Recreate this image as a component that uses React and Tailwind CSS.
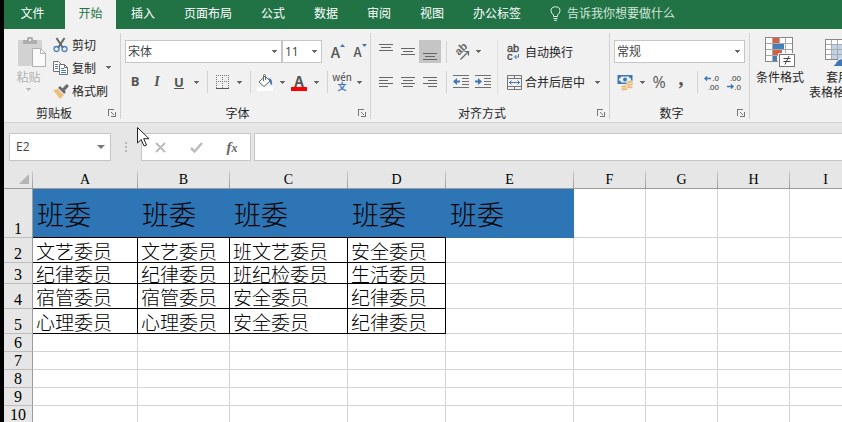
import React, { useState } from "react";

const tabs = ["插入", "页面布局", "公式", "数据", "审阅", "视图", "办公标签"];

const columns = ["A", "B", "C", "D", "E", "F", "G", "H", "I"];

const rows = [
  { id: 1, height: "h-[49px]", cells: ["班委", "班委", "班委", "班委", "班委"] },
  { id: 2, height: "h-[25px]", cells: ["文艺委员", "文艺委员", "班文艺委员", "安全委员"] },
  { id: 3, height: "h-[21px]", cells: ["纪律委员", "纪律委员", "班纪检委员", "生活委员"] },
  { id: 4, height: "h-[25px]", cells: ["宿管委员", "宿管委员", "安全委员", "纪律委员"] },
  { id: 5, height: "h-[25px]", cells: ["心理委员", "心理委员", "安全委员", "纪律委员"] },
  { id: 6, height: "h-[18px]", cells: [] },
  { id: 7, height: "h-[18px]", cells: [] },
  { id: 8, height: "h-[18px]", cells: [] },
  { id: 9, height: "h-[18px]", cells: [] },
  { id: 10, height: "h-[18px]", cells: [] },
];

const Caret = ({ color = "#666" }) => (
  <svg width="5" height="3" viewBox="0 0 5 3" shapeRendering="crispEdges">
    <path d="M0 0h5v1H0zM1 1h3v1H1zM2 2h1v1H2z" fill={color} />
  </svg>
);

const CaretButton = ({ label }) => (
  <button aria-label={label} className="flex h-[22px] w-3 shrink-0 items-center justify-center">
    <Caret />
  </button>
);

const Tool = ({ label, active, children }) => (
  <button
    aria-label={label}
    className={`flex w-[22px] shrink-0 items-center justify-center ${active ? "h-[23px] bg-[#c5c5c5]" : "h-[22px]"}`}
  >
    {children}
  </button>
);

const Divider = () => <span className="ml-[5px] mr-[3px] h-[22px] w-px shrink-0 bg-[#d2d2d2]" />;

const Group = ({ title, children }) => (
  <section className="flex shrink-0 flex-col justify-between border-r border-[#d2d2d2]">
    {children}
    <div className="flex h-3 items-center">
      <h2 className="flex-1 text-center text-xs leading-3">{title}</h2>
      <button aria-label={`${title}设置`} className="flex w-4 justify-center">
        <svg width="8" height="8" viewBox="0 0 8 8" shapeRendering="crispEdges">
          <path d="M0 0h6v1H1v6H0zM3 3h1v1H3zM4 4h1v1H4zM5 5h1v1H5z" fill="#777" />
          <path d="M7 3h1v5H3V7h4z" fill="#777" />
        </svg>
      </button>
    </div>
  </section>
);

const Picker = ({ label, value, width }) => (
  <div className={`relative ${width}`}>
    <select
      aria-label={label}
      defaultValue={value}
      className="block h-[23px] w-full appearance-none border border-[#c6c6c6] bg-white pl-[2px] font-['Open_Sans','Noto_Sans_CJK_SC',sans-serif] text-xs text-[#444]"
    >
      <option>{value}</option>
    </select>
    <span className="pointer-events-none absolute right-[5px] top-[10px]">
      <Caret />
    </span>
  </div>
);

// Stacked text lines, given as [x, width] pairs
const Lines = ({ lines, top = 0 }) => (
  <svg width="14" height="16" viewBox="0 0 14 16" shapeRendering="crispEdges">
    {lines.map(([x, w], i) => (
      <rect key={i} x={x} y={top + i * 3} width={w} height="1" fill="#666" />
    ))}
  </svg>
);

const PasteIcon = () => (
  <svg width="28" height="30" viewBox="0 0 28 30">
    <rect x="0" y="3" width="24" height="26" rx="1" fill="#d3d2d2" />
    <path d="M5 3h4V1.500Q9 0 10.500 0h3Q15 0 15 1.500V3h4v4H5z" fill="#adadad" />
    <rect x="11" y="2" width="2" height="2" fill="#f1f1f1" />
    <path d="M14.500 11.500h8l5 5v13h-13z" fill="#fafafa" stroke="#b1b1b1" />
    <path d="M22.500 11.500v5h5" fill="none" stroke="#b1b1b1" />
  </svg>
);

const CutIcon = () => (
  <svg width="16" height="16" viewBox="0 0 16 16" fill="none">
    <path d="M3.500 1L10 11M11.500 1L5 11" stroke="#666" strokeWidth="2" />
    <circle cx="3.500" cy="12" r="2.500" stroke="#4a7ebb" strokeWidth="1.300" />
    <circle cx="11.500" cy="12" r="2.500" stroke="#4a7ebb" strokeWidth="1.300" />
  </svg>
);

const CopyIcon = () => (
  <svg width="16" height="16" viewBox="0 0 16 16" fill="#fff">
    <path d="M.5 1.500h5l3 3v7h-8z" stroke="#707070" />
    <path d="M2 4.500h3M2 6.500h3M2 8.500h3" stroke="#4a7ebb" />
    <path d="M6.500 4.500h5l3 3v7h-8z" stroke="#707070" />
    <path d="M11.500 4.500v3h3" stroke="#707070" fill="none" />
    <path d="M8 8.500h3M8 10.500h5M8 12.500h5" stroke="#4a7ebb" />
  </svg>
);

const BrushIcon = () => (
  <svg width="16" height="16" viewBox="0 0 16 16">
    <path d="M0 7l5-1 6 6-4 4z" fill="#ebc07c" />
    <path d="M5 5l2-2 6 6-2 2z" fill="#6b6b6b" />
    <path d="M9 6l4.500-5 2.500 2-4.500 5z" fill="#6b6b6b" />
    <path d="M5 5.500l6 6" stroke="#f1f1f1" />
  </svg>
);

const BorderIcon = () => (
  <svg width="13" height="14" viewBox="0 0 13 14" shapeRendering="crispEdges" stroke="#777" fill="none">
    <path d="M0 .5h13M0 6.500h13" strokeDasharray="1 1" />
    <path d="M.5 0v13M6.500 0v13M12.500 0v13" strokeDasharray="1 1" />
    <path d="M0 13.500h13" stroke="#555" />
  </svg>
);

const BucketIcon = () => (
  <svg width="16" height="17" viewBox="0 0 16 17">
    <path d="M2 8l6-6 5 5-6 5.500z" fill="#fff" stroke="#666" />
    <path d="M6.500 7V1.500Q6.500.5 7.500.5T8.500 1.500V6" fill="none" stroke="#666" />
    <path d="M11 4q5 0 4 7-2.500-.5-2-4z" fill="#4a7ebb" />
    <rect y="13" width="16" height="4" fill="#fff" />
  </svg>
);

const OrientIcon = () => (
  <svg width="17" height="16" viewBox="0 0 17 16">
    <text
      x="0"
      y="0"
      transform="translate(6 12) rotate(-45)"
      fontSize="11"
      fontWeight="bold"
      fontFamily="Liberation Sans, sans-serif"
      fill="#666"
    >
      ab
    </text>
    <path d="M7.500 15.500l8-8M11.500 7.500h4v4" fill="none" stroke="#666" strokeWidth="1.200" />
  </svg>
);

const IndentIcon = ({ right }) => (
  <svg width="16" height="14" viewBox="0 0 16 14">
    <path d="M0 .5h16M9 3.500h7M9 6.500h7M9 9.500h7M0 12.500h16" stroke="#707070" shapeRendering="crispEdges" />
    <path
      d={right ? "M0 5.500h3V3l4 3.500L3 10V7.500H0z" : "M7 5.500H4V3L0 6.500 4 10V7.500h3z"}
      fill="#3f77b5"
    />
  </svg>
);

const WrapIcon = () => (
  <svg width="14" height="16" viewBox="0 0 14 16">
    <g fontSize="11" fontFamily="Liberation Sans, sans-serif" fill="#444" stroke="#444" strokeWidth=".3">
      <text x="0" y="8">ab</text>
      <text x="0" y="16">c</text>
    </g>
    <path d="M11.500 10v3H8M9.500 11l-2 2 2 2" fill="none" stroke="#3f77b5" />
  </svg>
);

const MergeIcon = () => (
  <svg width="15" height="15" viewBox="0 0 15 15" fill="none">
    <path d="M.5.500h14v14H.5zM.5 3.500h14M.5 11.500h14M7.500.5v3M7.500 11.500v3" stroke="#777" />
    <path d="M2 7.500h11M4.500 5.500l-2 2 2 2M10.500 5.500l2 2-2 2" stroke="#3f77b5" />
  </svg>
);

const MoneyIcon = () => (
  <svg width="17" height="17" viewBox="0 0 17 17">
    <rect x=".5" y="1" width="15" height="9" fill="#3f77b5" />
    <path d="M2 4.500q2 0 2-2h8q0 2 2 2v2q-2 0-2 2H4q0-2-2-2z" fill="#e8f0f8" />
    <circle cx="8" cy="5.500" r="2" fill="#3f77b5" />
    <g fill="#eabb72" stroke="#f1f1f1" strokeWidth=".6">
      <ellipse cx="7.500" cy="15" rx="3.500" ry="1.500" />
      <ellipse cx="7.500" cy="12.500" rx="3.500" ry="1.500" />
      <ellipse cx="12.500" cy="13" rx="3.500" ry="1.500" />
      <ellipse cx="12.500" cy="10.500" rx="3.500" ry="1.500" />
      <ellipse cx="12.500" cy="8" rx="3.500" ry="1.500" />
    </g>
  </svg>
);

const DecimalIcon = ({ less }) => (
  <svg width="16" height="15" viewBox="0 0 16 15">
    <g fontSize="8" fontFamily="Liberation Sans, sans-serif" fill="#333" textAnchor="end">
      <text x="15" y="6">{less ? ".00" : ".0"}</text>
      <text x="15" y="15">{less ? ".0" : ".00"}</text>
    </g>
    <path
      d={less ? "M1 11.500h6M5 9.500l2 2-2 2" : "M7 3.500H1M3 1.500l-2 2 2 2"}
      fill="none"
      stroke="#3f77b5"
      strokeWidth="1.400"
    />
  </svg>
);

const ConditionalIcon = () => (
  <svg width="30" height="30" viewBox="0 0 30 30">
    <rect x=".5" y=".5" width="27" height="24" fill="#fff" stroke="#888" />
    <path d="M1 6.500h26M1 12.500h26M1 18.500h26M7.500 1v23M14.500 1v23M20.500 1v23" stroke="#aaa" />
    <rect x="8" y="1" width="6" height="5" fill="#d9603f" />
    <rect x="8" y="7" width="11" height="5" fill="#4680bb" />
    <rect x="8" y="13" width="9" height="5" fill="#d9603f" />
    <rect x="8" y="19" width="4" height="5" fill="#4680bb" />
    <rect x="13" y="16" width="17" height="14" fill="#f1f1f1" />
    <rect x="14.500" y="17.500" width="15" height="12" fill="#fff" stroke="#777" />
    <path d="M18.500 21.500h7M18.500 24.500h7M24 19l-4 8.500" stroke="#444" fill="none" />
  </svg>
);

const TableFormatIcon = () => (
  <svg width="30" height="28" viewBox="0 0 30 28">
    <rect x=".5" y=".5" width="28" height="20" fill="#fff" stroke="#888" />
    <rect x="7" y="6" width="21" height="14" fill="#bfd2e8" />
    <path d="M1 5.500h27M1 10.500h27M1 15.500h27M6.500 1v19M12.500 1v19M18.500 1v19M24.500 1v19" stroke="#aaa" />
    <path d="M6 27.500q4-1 5-4t6-4l7-6 5 5-10 9z" fill="#3f77b5" stroke="#f1f1f1" />
  </svg>
);

const CursorIcon = () => (
  <svg width="13" height="20" viewBox="0 0 13 20">
    <path d="M.5.500v15.500l3.700-3.500 2.800 6.500 2.500-1-2.800-6.300H12z" fill="#fff" stroke="#222" />
  </svg>
);

const TabBar = () => (
  <nav className="flex h-[29px] shrink-0 items-center bg-[#217346] pb-[3px] text-xs text-white">
    <a href="#file" className="w-[61px] shrink-0 pr-1 text-center">文件</a>
    <a href="#home" className="-mb-[3px] flex h-[29px] w-[51px] shrink-0 items-center justify-center bg-[#f1f1f1] pb-[3px] text-[#217346]">
      开始
    </a>
    <div className="flex shrink-0 gap-[29px] pl-[15px]">
      {tabs.map((tab) => (
        <a key={tab} href={`#${tab}`}>{tab}</a>
      ))}
    </div>
    <button className="ml-[29px] flex shrink-0 items-center gap-[6px] text-[#d3e5da]">
      <svg width="11" height="15" viewBox="0 0 11 15" fill="none" stroke="#e4efe8">
        <path d="M3.500 10.500V9Q1 7 1 4.800 1 .8 5.500.8T10 4.800Q10 7 7.500 9v1.500zM3.500 12.500h4M4 14.300h3" />
      </svg>
      告诉我你想要做什么
    </button>
  </nav>
);

const Ribbon = () => (
  <div className="flex h-[94px] shrink-0 border-b border-[#d2d2d2] bg-[#f1f1f1] pb-[3px] pt-1 text-xs text-[#262626]">
    <Group title="剪贴板">
      <div className="flex w-[116px]">
        <button className="flex w-[49px] flex-col items-center pt-1 text-[#b1b1b1]">
          <span className="pl-[6px]"><PasteIcon /></span>
          <span className="mb-[3px] mt-[2px] leading-4">粘贴</span>
          <Caret color="#bbb" />
        </button>
        <div className="flex flex-col">
          <div className="flex h-[23px] items-center">
            <button className="flex items-center gap-[3px]"><CutIcon />剪切</button>
          </div>
          <div className="flex h-[23px] items-center">
            <button className="mr-[6px] flex items-center gap-[3px]"><CopyIcon />复制</button>
            <CaretButton label="复制选项" />
          </div>
          <div className="flex h-[23px] items-center">
            <button className="flex items-center gap-[3px]"><BrushIcon />格式刷</button>
          </div>
        </div>
      </div>
    </Group>

    <Group title="字体">
      <div className="flex w-[249px] flex-col gap-2 pl-[3px] pt-[7px]">
        <div className="flex items-center pl-px">
          <Picker label="字体" value="宋体" width="w-[157px]" />
          <Picker label="字号" value="11" width="w-10" />
          <div className="flex pl-1">
            <button aria-label="增大字号" className="flex w-6 items-start justify-center text-[15px] font-medium leading-5 text-[#555]">
              A
              <svg width="5" height="3" viewBox="0 0 5 3" className="mt-[2px]"><path d="M0 3l2.500-3L5 3z" fill="#3f77b5" /></svg>
            </button>
            <button aria-label="减小字号" className="flex w-5 items-start justify-center text-[13px] font-medium leading-5 text-[#555]">
              A
              <svg width="5" height="3" viewBox="0 0 5 3" className="mt-[2px]"><path d="M0 0h5L2.500 3z" fill="#3f77b5" /></svg>
            </button>
          </div>
        </div>
        <div className="flex items-center text-[#555]">
          <Tool label="加粗"><b className="font-['Open_Sans',sans-serif] text-[13px]">B</b></Tool>
          <Tool label="倾斜"><i className="font-['Liberation_Serif',serif] text-sm font-bold">I</i></Tool>
          <Tool label="下划线">
            <span className="border-b border-[#555] font-['Open_Sans',sans-serif] text-[13px] font-bold leading-3">U</span>
          </Tool>
          <CaretButton label="下划线选项" />
          <Divider />
          <Tool label="边框"><BorderIcon /></Tool>
          <CaretButton label="边框选项" />
          <Divider />
          <Tool label="填充颜色"><BucketIcon /></Tool>
          <CaretButton label="填充颜色选项" />
          <Tool label="字体颜色">
            <span className="w-4 border-b-4 border-[#f00] text-center text-[15px] font-bold leading-[13px]">A</span>
          </Tool>
          <CaretButton label="字体颜色选项" />
          <Divider />
          <Tool label="拼音">
            <span className="flex flex-col items-center text-[10px] leading-[8px] text-[#444]">
              wén
              <span className="text-[9px] font-bold leading-[11px] text-[#3f77b5]">文</span>
            </span>
          </Tool>
          <CaretButton label="拼音选项" />
        </div>
      </div>
    </Group>

    <Group title="对齐方式">
      <div className="flex w-[238px] pl-1 pt-[7px]">
        <div className="flex flex-col gap-2">
          <div className="flex items-center">
            <Tool label="顶端对齐"><Lines top={0} lines={[[0, 14], [2, 10], [0, 14]]} /></Tool>
            <Tool label="垂直居中"><Lines top={4} lines={[[0, 14], [2, 10], [0, 14]]} /></Tool>
            <Tool label="底端对齐" active><Lines top={9} lines={[[0, 14], [2, 10], [0, 14]]} /></Tool>
            <Divider />
            <Tool label="方向"><OrientIcon /></Tool>
            <CaretButton label="方向选项" />
          </div>
          <div className="flex items-center">
            <Tool label="左对齐"><Lines top={3} lines={[[0, 14], [0, 9], [0, 14], [0, 9]]} /></Tool>
            <Tool label="居中"><Lines top={3} lines={[[0, 14], [2, 10], [0, 14], [2, 10]]} /></Tool>
            <Tool label="右对齐"><Lines top={3} lines={[[0, 14], [5, 9], [0, 14], [5, 9]]} /></Tool>
            <Divider />
            <Tool label="减少缩进量"><IndentIcon /></Tool>
            <Tool label="增加缩进量"><IndentIcon right /></Tool>
          </div>
        </div>
        <span className="ml-[3px] h-[54px] w-px bg-[#e0e0e0]" />
        <div className="flex flex-col gap-2 pl-2">
          <button className="flex h-[23px] items-center gap-[3px]">
            <span className="flex w-4 justify-center"><WrapIcon /></span>
            自动换行
          </button>
          <div className="flex items-center">
            <button className="mr-[6px] flex h-[22px] items-center gap-[3px]">
              <span className="flex w-4 justify-center"><MergeIcon /></span>
              合并后居中
            </button>
            <CaretButton label="合并选项" />
          </div>
        </div>
      </div>
    </Group>

    <Group title="数字">
      <div className="flex w-[139px] flex-col gap-2 pl-1 pt-[7px]">
        <Picker label="数字格式" value="常规" width="w-[131px]" />
        <div className="flex items-center text-[#555]">
          <Tool label="会计数字格式"><MoneyIcon /></Tool>
          <CaretButton label="会计格式选项" />
          <Tool label="百分比样式">
            <span className="font-['Open_Sans',sans-serif] text-base font-medium">%</span>
          </Tool>
          <Tool label="千位分隔样式">
            <span className="pb-2 font-['Liberation_Serif',serif] text-xl font-bold leading-3">,</span>
          </Tool>
          <Divider />
          <Tool label="增加小数位数"><DecimalIcon /></Tool>
          <Tool label="减少小数位数"><DecimalIcon less /></Tool>
        </div>
      </div>
    </Group>

    <section className="flex min-w-0 flex-1 items-start gap-px overflow-hidden pl-1 pt-1">
      <button className="flex w-[52px] shrink-0 flex-col items-center">
        <ConditionalIcon />
        <span className="mb-[3px] mt-[2px] leading-4">条件格式</span>
        <Caret />
      </button>
      <button className="flex w-[62px] shrink-0 flex-col items-center">
        <span className="flex h-[30px] items-end pl-1"><TableFormatIcon /></span>
        <span className="mt-[2px] leading-[15px]">套用</span>
        <span className="flex items-center gap-[5px] leading-[15px]">表格格式<Caret /></span>
      </button>
    </section>
  </div>
);

const FormulaBar = ({ cell, setCell }) => (
  <div className="relative flex h-[38px] shrink-0 items-end pl-[5px]">
    <div className="flex h-7 w-[102px] shrink-0 items-center border border-[#c6c6c6] bg-white">
      <input
        aria-label="名称框"
        value={cell}
        onChange={(e) => setCell(e.target.value)}
        className="w-full min-w-0 flex-1 pl-[6px] font-['Open_Sans',sans-serif] text-xs text-[#444] outline-none"
      />
      <button aria-label="名称列表" className="flex w-[18px] justify-center">
        <svg width="8" height="4" viewBox="0 0 8 4"><path d="M0 0h8L4 4z" fill="#777" /></svg>
      </button>
    </div>
    <div className="flex h-7 w-[30px] shrink-0 flex-col items-center justify-center gap-[2px]">
      <span className="size-[2px] bg-[#b5b5b5]" />
      <span className="size-[2px] bg-[#b5b5b5]" />
      <span className="size-[2px] bg-[#b5b5b5]" />
    </div>
    <div className="flex h-7 shrink-0 items-center border border-[#c6c6c6] bg-white">
      <button aria-label="取消" className="flex w-9 justify-center">
        <svg width="11" height="11" viewBox="0 0 11 11"><path d="M1 1l9 9M10 1l-9 9" stroke="#bcbcbc" strokeWidth="2" /></svg>
      </button>
      <button aria-label="输入" className="flex w-9 justify-center">
        <svg width="13" height="11" viewBox="0 0 13 11"><path d="M1 6l3.500 3.500L12 1" stroke="#bcbcbc" strokeWidth="2.500" fill="none" /></svg>
      </button>
      <button aria-label="插入函数" className="w-9 text-center font-['Liberation_Serif',serif] text-[15px] font-bold italic leading-5 text-[#666]">
        f<span className="text-xs">x</span>
      </button>
    </div>
    <input aria-label="编辑栏" className="ml-[3px] h-7 min-w-0 flex-1 border border-r-0 border-[#c6c6c6] bg-white px-1 text-xs outline-none" />
    <span className="pointer-events-none absolute left-[133px] top-1">
      <CursorIcon />
    </span>
  </div>
);

// Row 1 is the blue title row, A2:D5 has the black grid, the rest is plain
const cellStyle = (row, col) => {
  if (row === 1 && col < 5) {
    return `bg-[#2e75b6] border-r-[#2e75b6] pl-1 text-[27px] leading-[27px] ${col < 4 ? "border-b-black" : "border-b-[#2e75b6]"}`;
  }
  if (row > 1 && row < 6 && col < 4) {
    return "border-black pl-[3px] text-[19px] leading-[19px]";
  }
  return "border-[#d4d4d4]";
};

const Sheet = () => (
  <table className="w-full table-fixed border-separate border-spacing-0 bg-white">
    <colgroup>
      <col className="w-[29px]" />
      <col className="w-[105px]" />
      <col className="w-[92px]" />
      <col className="w-[118px]" />
      <col className="w-[98px]" />
      <col className="w-[128px]" />
      <col className="w-[72px]" />
      <col className="w-[72px]" />
      <col className="w-[72px]" />
      <col className="w-[72px]" />
      <col />
    </colgroup>
    <thead className="bg-[#e6e6e6] font-['Liberation_Serif',serif] text-sm leading-4">
      <tr className="h-7">
        <th className="border-b border-[#9b9b9b] p-0 align-bottom">
          <div className="flex h-[17px] justify-end gap-[3px]">
            <svg width="10" height="10" viewBox="0 0 10 10" className="mt-[3px]"><path d="M10 0v10H0z" fill="#b4b4b4" /></svg>
            <span className="w-px bg-linear-to-b from-[#cfcfcf] to-[#9b9b9b]" />
          </div>
        </th>
        {columns.map((name) => (
          <th key={name} className="border-b border-[#9b9b9b] p-0 align-bottom font-normal">
            <div className="flex h-[17px] items-end">
              <span className="flex-1 text-center">{name}</span>
              <span className="h-full w-px bg-linear-to-b from-[#cfcfcf] to-[#9b9b9b]" />
            </div>
          </th>
        ))}
        <th className="border-b border-[#9b9b9b] p-0" />
      </tr>
    </thead>
    <tbody>
      {rows.map((row) => (
        <tr key={row.id} className={row.height}>
          <th className="border-b border-r border-b-[#bdbdbd] border-r-[#9b9b9b] bg-[#e6e6e6] p-0 align-bottom font-['Liberation_Serif',serif] text-base font-normal leading-4">
            {row.id}
          </th>
          {columns.map((name, col) => (
            <td key={name} className={`overflow-hidden whitespace-nowrap border-b border-r p-0 align-middle font-light ${cellStyle(row.id, col)}`}>
              {row.cells[col]}
            </td>
          ))}
          <td className="border-b border-[#d4d4d4] p-0" />
        </tr>
      ))}
    </tbody>
  </table>
);

const App = () => {
  const [cell, setCell] = useState("E2");

  return (
    <div className="flex h-screen flex-col overflow-hidden border-l-4 border-black bg-[#e6e6e6] font-['Noto_Sans_CJK_SC',sans-serif] text-black">
      <TabBar />
      <Ribbon />
      <FormulaBar cell={cell} setCell={setCell} />
      <main className="min-h-0 flex-1 overflow-hidden bg-white">
        <Sheet />
      </main>
    </div>
  );
};

export default App;
